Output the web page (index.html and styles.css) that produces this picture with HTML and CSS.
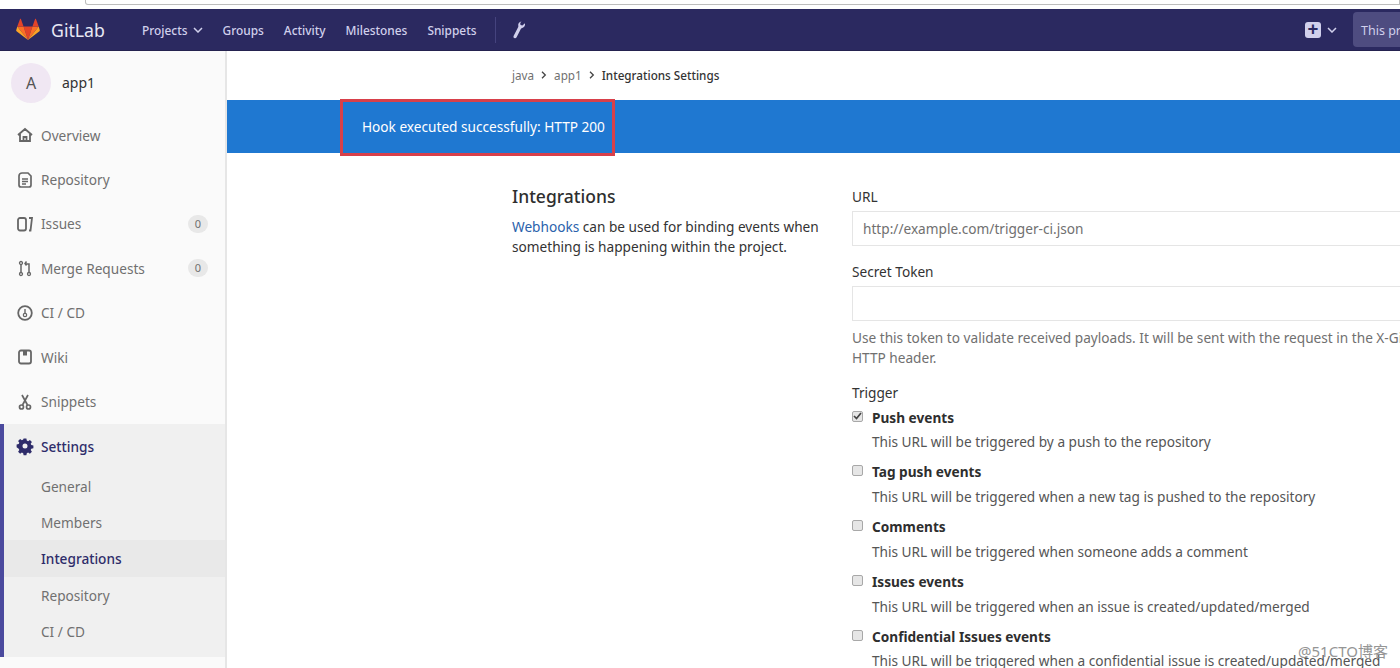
FILE: index.html
```html
<!DOCTYPE html>
<html lang="en">
<head>
<meta charset="utf-8">
<title>Integrations Settings</title>
<link rel="stylesheet" href="styles.css">
</head>
<body>
<div class="chrome"><div class="address"></div></div>
<header class="nav">
  <div class="logo">
    <svg class="tanuki" width="24" height="23" viewBox="0 0 26 24"><path fill="#e24329" d="M13 23.5 17.8 8.8H8.2z"/><path fill="#fc6d26" d="M13 23.5 8.2 8.8H1.4z"/><path fill="#fca326" d="M1.4 8.8.2 12.8c-.1.4 0 .8.4 1L13 23.5z"/><path fill="#e24329" d="M1.4 8.8h6.8L5.300.7c-.2-.4-.7-.4-.9 0z"/><path fill="#fc6d26" d="M13 23.5 17.800 8.800h6.800z"/><path fill="#fca326" d="m24.600 8.800 1.200 4c.1.400 0 .8-.4 1L13 23.500z"/><path fill="#e24329" d="M24.600 8.800h-6.800L20.700.7c.2-.4.7-.4.9 0z"/></svg>
    <span class="wordmark">GitLab</span>
  </div>
  <nav class="links">
    <a class="link">Projects <svg class="chev" width="10" height="6" viewBox="0 0 10 6"><path d="M1 1l4 4 4-4" fill="none" stroke="#d1d0ec" stroke-width="1.500"/></svg></a>
    <a class="link">Groups</a>
    <a class="link">Activity</a>
    <a class="link">Milestones</a>
    <a class="link">Snippets</a>
  </nav>
  <span class="divider"></span>
  <svg class="wrench" width="14" height="18" viewBox="0 0 14 18"><path fill="#d1d0ec" d="M9.500.5c-2.300.2-3.700 2.200-3.200 4.500.1.500 0 .9-.2 1.300L1.700 14.700c-.5 1-.2 2 .6 2.400.9.500 1.800.1 2.300-.8l4.200-8.300c.2-.4.500-.6.900-.8 2.300-.6 3.800-2.700 3.300-5l-2.600 2.400-1.900-.7-.3-2z"/></svg>
  <div class="nav-right">
    <span class="plus">+</span>
    <svg class="chev" width="10" height="6" viewBox="0 0 10 6"><path d="M1 1l4 4 4-4" fill="none" stroke="#d1d0ec" stroke-width="1.500"/></svg>
    <div class="search">This project</div>
  </div>
</header>
<div class="main">
  <aside class="sidebar">
    <div class="project"><span class="avatar">A</span><span class="project-name">app1</span></div>
    <ul class="menu">
      <li class="item"><svg class="ico" viewBox="0 0 16 16"><path d="M1 8l7-6 7 6M3 7v7h10V7M6.500 14v-4h3v4" fill="none" stroke="#666" stroke-width="1.800"/></svg>Overview</li>
      <li class="item"><svg class="ico" viewBox="0 0 16 16"><path d="M5 1h6l3 3v9a2 2 0 0 1-2 2H4a2 2 0 0 1-2-2V4a3 3 0 0 1 3-3zM5 7h6M5 9.500h6M5 12h4" fill="none" stroke="#666" stroke-width="1.700"/></svg>Repository</li>
      <li class="item"><svg class="ico" viewBox="0 0 16 16"><rect x="1" y="2" width="8" height="12.500" rx="2" fill="none" stroke="#666" stroke-width="1.800"/><path d="M12 2h3l-1.500 12.500H12" fill="none" stroke="#666" stroke-width="1.800"/></svg>Issues<span class="count">0</span></li>
      <li class="item"><svg class="ico" viewBox="0 0 16 16"><circle cx="4" cy="3" r="1.500" fill="none" stroke="#666" stroke-width="1.300"/><circle cx="4" cy="14" r="1.500" fill="none" stroke="#666" stroke-width="1.300"/><circle cx="12" cy="14" r="1.500" fill="none" stroke="#666" stroke-width="1.300"/><path d="M4 5v7M12 12V4H8M9.500 1.500 8 3.500l1.500 2" fill="none" stroke="#666" stroke-width="1.500"/></svg>Merge Requests<span class="count">0</span></li>
      <li class="item"><svg class="ico" viewBox="0 0 16 16"><circle cx="8" cy="8" r="6.800" fill="none" stroke="#666" stroke-width="1.800"/><circle cx="8" cy="10" r="1.700" fill="none" stroke="#666" stroke-width="1.200"/><path d="M8 4v4" stroke="#666" stroke-width="1.400"/></svg>CI / CD</li>
      <li class="item"><svg class="ico" viewBox="0 0 16 16"><rect x="2" y="1.500" width="12" height="13" rx="2" fill="none" stroke="#666" stroke-width="1.800"/><path d="M6 1.500h4v5H6z" fill="#666"/></svg>Wiki</li>
      <li class="item"><svg class="ico" viewBox="0 0 16 16"><circle cx="4.500" cy="13" r="2" fill="none" stroke="#666" stroke-width="1.700"/><circle cx="11.500" cy="13" r="2" fill="none" stroke="#666" stroke-width="1.700"/><path d="M5.500 11 11 1M10.500 11 5 1" fill="none" stroke="#666" stroke-width="1.700"/></svg>Snippets</li>
    </ul>
    <div class="active-group">
      <div class="group-title"><svg class="ico" viewBox="0 0 16 16"><path fill="#2e2c6a" fill-rule="evenodd" d="M6.600.5h2.800l.4 2.100 1.300.6 1.800-1.200 2 2-1.200 1.800.6 1.300 2.100.4v2.800l-2.100.4-.6 1.300 1.200 1.800-2 2-1.800-1.200-1.300.6-.4 2.100H6.600l-.4-2.100-1.300-.6-1.800 1.200-2-2 1.200-1.800-.6-1.300L-.4 9.300V6.500l2.100-.4.6-1.300-1.200-1.800 2-2 1.800 1.200 1.300-.6zM8 5.500a2.500 2.500 0 1 0 0 5 2.500 2.500 0 0 0 0-5z"/></svg>Settings</div>
      <ul class="submenu">
        <li class="sub">General</li>
        <li class="sub">Members</li>
        <li class="sub sub-active">Integrations</li>
        <li class="sub">Repository</li>
        <li class="sub">CI / CD</li>
      </ul>
    </div>
  </aside>
  <main class="content">
    <div class="crumbs">
      <span>java</span><svg class="crumb-sep" width="6" height="8" viewBox="0 0 6 8"><path d="M1 .8 4.300 4 1 7.200" fill="none" stroke="#444" stroke-width="1.300"/></svg>
      <span>app1</span><svg class="crumb-sep" width="6" height="8" viewBox="0 0 6 8"><path d="M1 .8 4.300 4 1 7.200" fill="none" stroke="#444" stroke-width="1.300"/></svg>
      <span class="crumb-now">Integrations Settings</span>
    </div>
    <div class="flash">Hook executed successfully: HTTP 200</div>
    <div class="settings">
      <section class="intro">
        <h4 class="intro-title">Integrations</h4>
        <p class="intro-text"><a class="blue">Webhooks</a> can be used for binding events when something is happening within the project.</p>
      </section>
      <form class="form">
        <label class="label">URL</label>
        <div class="input placeholder">http://example.com/trigger-ci.json</div>
        <label class="label label-token">Secret Token</label>
        <div class="input"></div>
        <p class="help">Use this token to validate received payloads. It will be sent with the request in the X-Gitlab-Token<br>HTTP header.</p>
        <div class="label label-trigger">Trigger</div>
        <div class="check"><span class="box on"><svg width="9" height="8" viewBox="0 0 9 8"><path d="M1 4l2.500 2.500L8 1" fill="none" stroke="#444" stroke-width="1.700"/></svg></span><b class="check-name">Push events</b></div>
        <p class="check-desc">This URL will be triggered by a push to the repository</p>
        <div class="check"><span class="box"></span><b class="check-name">Tag push events</b></div>
        <p class="check-desc">This URL will be triggered when a new tag is pushed to the repository</p>
        <div class="check"><span class="box"></span><b class="check-name">Comments</b></div>
        <p class="check-desc">This URL will be triggered when someone adds a comment</p>
        <div class="check"><span class="box"></span><b class="check-name">Issues events</b></div>
        <p class="check-desc">This URL will be triggered when an issue is created/updated/merged</p>
        <div class="check"><span class="box"></span><b class="check-name">Confidential Issues events</b></div>
        <p class="check-desc">This URL will be triggered when a confidential issue is created/updated/merged</p>
      </form>
    </div>
  </main>
</div>
<div class="red-box"></div>
<div class="watermark">@51CTO博客</div>
</body>
</html>
```
FILE: styles.css
```css
* { box-sizing: border-box; }
html, body { margin: 0; height: 668px; overflow: hidden; background: #fff; }
body { font-family: "Noto Sans", "Noto Sans CJK SC", sans-serif; font-size: 13.65px; color: #333; position: relative; }
ul { list-style: none; margin: 0; padding: 0; }
p { margin: 0; }

.chrome { height: 9px; background: #fff; padding-left: 85px; }
.address { height: 5px; border: 1px solid #bdbdbd; border-top: 0; border-radius: 0 0 0 3px; }

.nav { height: 42px; background: #2b2960; display: flex; align-items: center; padding-left: 16px; border-bottom: 1px solid #24224f; white-space: nowrap; }
.logo { display: flex; align-items: center; width: 126px; }
.tanuki { flex: none; margin-right: 11px; }
.wordmark { font-size: 17.700px; color: #e8e8f4; }
.links { display: flex; gap: 20px; padding-top: 1px; }
.link { font-size: 11.900px; font-weight: 500; color: #d1d0ec; display: flex; align-items: center; gap: 5px; }
.divider { width: 1px; height: 26px; background: #45437e; margin: 0 16px 0 19px; }
.wrench { flex: none; }
.nav-right { margin-left: auto; display: flex; align-items: center; gap: 6px; }
.plus { width: 16px; height: 16px; border-radius: 3px; background: #d1d0ec; color: #2b2960; font-size: 19px; font-weight: 700; line-height: 15px; text-align: center; }
.search { width: 47px; height: 35px; margin-left: 10px; padding: 10px 0 0 8px; background: #4e4c80; border-radius: 4px 0 0 4px; color: #d1d0ec; font-size: 12.500px; overflow: hidden; }

.main { display: flex; height: 617px; }
.sidebar { width: 227px; flex: none; background: #fafafa; border-right: 2px solid #e6e6e6; }
.project { height: 62px; display: flex; align-items: center; padding-left: 11px; padding-top: 1px; }
.avatar { width: 40px; height: 40px; border-radius: 50%; background: #f0e7f3; color: #555; font-size: 16px; display: flex; align-items: center; justify-content: center; margin-right: 11px; }
.project-name { font-size: 14px; color: #333; }
.item { height: 44.400px; display: flex; align-items: center; padding-left: 17px; color: #707070; }
.ico { width: 16px; height: 16px; flex: none; margin-right: 8px; overflow: visible; }
.count { margin-left: auto; margin-right: 17px; width: 20px; height: 18px; border-radius: 9px; background: #e8e8e8; font-size: 11px; color: #707070; text-align: center; line-height: 18px; }
.active-group { background: #f0f0f0; border-left: 4px solid #4b4a9e; height: 233px; }
.group-title { height: 45px; display: flex; align-items: center; padding-left: 13px; color: #2e2c6a; font-weight: 500; }
.submenu { margin-top: -1px; }
.sub { height: 36.300px; line-height: 37px; padding-left: 37px; color: #707070; }
.sub-active { background: #e9e9e9; color: #2e2c6a; font-weight: 500; }

.content { flex: 1; min-width: 0; overflow: hidden; }
.crumbs { height: 49px; padding: 0 0 2px 285px; display: flex; align-items: center; gap: 7px; font-size: 11.700px; color: #707070; white-space: nowrap; }
.crumb-sep { flex: none; }
.crumb-now { color: #333; font-weight: 500; }
.flash { height: 53px; background: #1f78d1; color: #fff; padding-left: 135px; line-height: 54px; }
.settings { display: flex; padding: 30px 0 0 285px; }
.intro { width: 340px; flex: none; padding-right: 20px; }
.intro-title { margin: 0 0 8px; font-size: 17.500px; font-weight: 500; line-height: 26px; color: #2e2e2e; }
.intro-text { line-height: 20px; color: #333; }
.blue { color: #2a62ac; }
.form { width: 700px; flex: none; white-space: nowrap; padding-top: 4px; }
.label { display: block; line-height: 20px; height: 20px; margin-bottom: 4px; color: #333; }
.input { width: 640px; height: 35px; border: 1px solid #e5e5e5; padding: 0 10px; line-height: 34px; background: #fff; }
.placeholder { color: #707070; }
.label-token { margin-top: 16px; margin-bottom: 4px; }
.help { margin-top: 7px; color: #707070; line-height: 20px; }
.label-trigger { margin-top: 15px; margin-bottom: 4px; }
.check { display: flex; align-items: center; height: 20px; }
.box { width: 11px; height: 11px; border: 1px solid #a8a8a8; border-radius: 2px; background: #e6e6e6; margin-right: 9px; margin-top: -2px; display: flex; align-items: center; justify-content: center; }
.check-name { font-weight: 700; color: #2e2e2e; }
.check-desc { padding-left: 20px; line-height: 20px; margin: 5px 0 9.850px; color: #555; }

.red-box { position: absolute; left: 340px; top: 99px; width: 275px; height: 57px; border: 3px solid #d8404a; }
.watermark { position: absolute; left: 1298px; top: 640px; font-size: 15px; color: #8a8a8a; white-space: nowrap; opacity: .9; }
```
